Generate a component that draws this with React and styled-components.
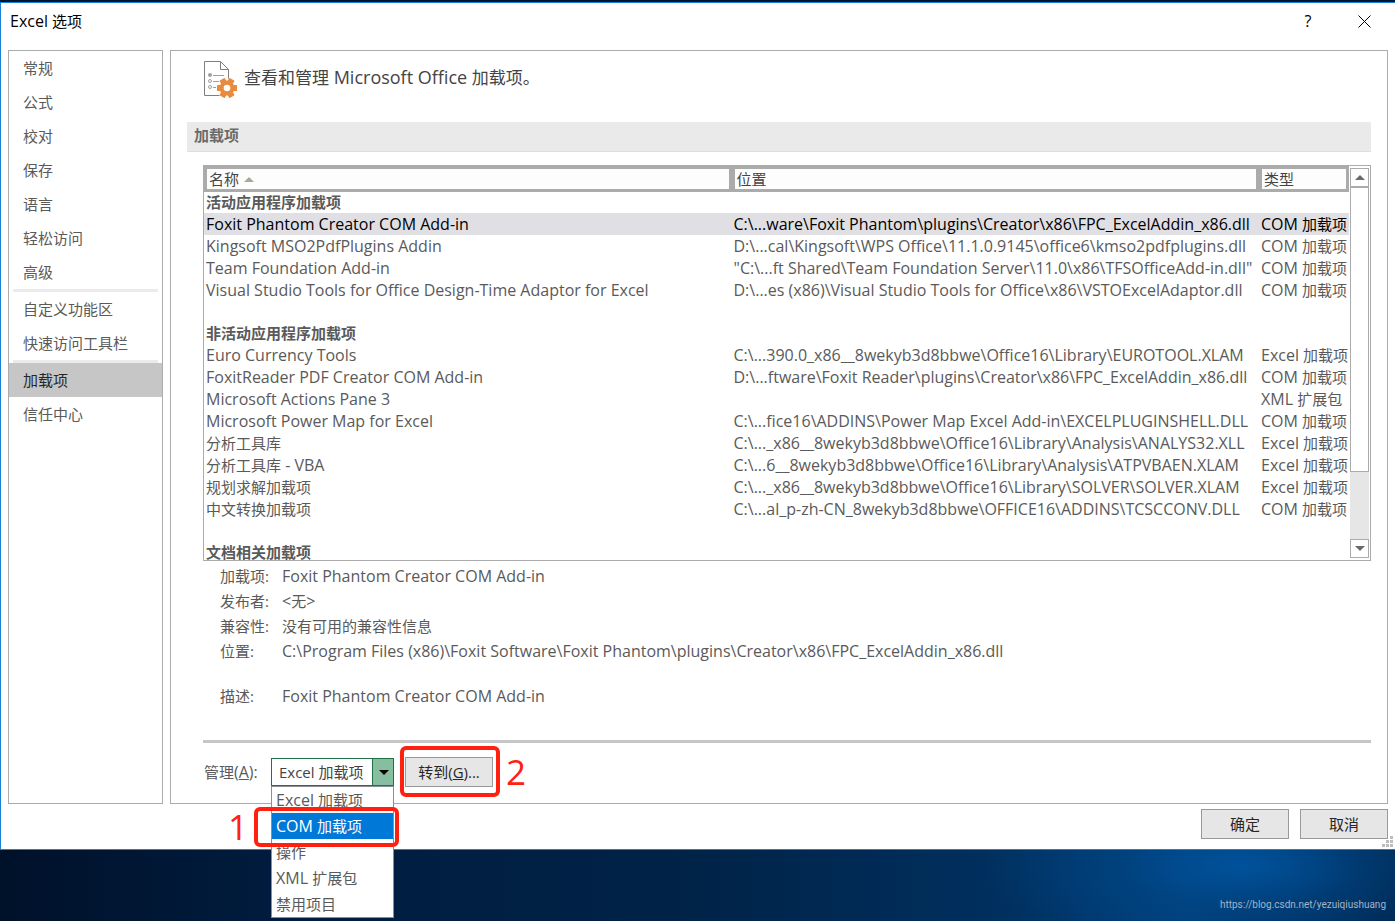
import React, { useState } from "react";
import styled, { createGlobalStyle } from "styled-components";

const GlobalStyle = createGlobalStyle`
  *, *::before, *::after { box-sizing: border-box; }
  body {
    margin: 0;
    font-family: "Open Sans", "Noto Sans CJK SC", sans-serif;
    font-size: 15px;
    line-height: 22px;
    color: #5a5a5a;
  }
  button, select { font: inherit; }
`;

const Latin = styled.span`
  font-size: ${(p) => (p.$large ? "18px" : "16px")};
  line-height: 1;
`;

const Desktop = styled.div`
  min-height: 100vh;
  display: flex;
  flex-direction: column;
  padding-top: 2px;
  background: #001733;
`;

const Dialog = styled.section`
  background: #fff;
  border: 1px solid #1883d7;
  border-right: 0;
`;

const TitleBar = styled.header`
  display: flex;
  align-items: center;
  height: 47px;
  padding: 0 14px 11px 9px;
  color: #000;
`;

const Title = styled.h1`
  margin: 0;
  flex: 1;
  font-size: 15px;
  font-weight: 400;
`;

const CaptionButtons = styled.div`
  display: flex;
  gap: 22px;
`;

const CaptionButton = styled.button`
  width: 34px;
  height: 30px;
  display: grid;
  place-items: center;
  padding: 0;
  border: 0;
  background: none;
  color: #000;
`;

const Body = styled.div`
  display: flex;
  gap: 7px;
  padding: 0 7px;
`;

const Sidebar = styled.nav`
  width: 155px;
  flex: none;
  border: 1px solid #ababab;
`;

const NavGroup = styled.ul`
  list-style: none;
  margin: 0;
  padding: 0;

  & + &::before {
    content: "";
    display: block;
    height: 3px;
    margin: 0 4px;
    background: #ebebeb;
  }
`;

const NavLink = styled.a`
  display: block;
  padding: 0 14px;
  line-height: 34px;
  text-decoration: none;
  color: ${(p) => (p.$active ? "#262626" : "#5a5a5a")};
  background: ${(p) => (p.$active ? "#c6c6c6" : "transparent")};
`;

const Panel = styled.main`
  flex: 1;
  min-width: 0;
  border: 1px solid #ababab;
  padding: 10px 16px 16px;
`;

const PanelHeading = styled.div`
  display: flex;
  gap: 6px;
  height: 61px;
  padding-left: 17px;
`;

const PanelTitle = styled.h2`
  margin: 0;
  font-size: 17px;
  font-weight: 400;
  line-height: 34px;
  color: #444;
`;

const SectionTitle = styled.h3`
  margin: 0 0 13px;
  padding: 0 7px;
  font-size: 15px;
  line-height: 26px;
  height: 30px;
  color: #6a6a6a;
  background: #eaeaea;
  border-bottom: 1px solid #dedede;
`;

const Inset = styled.div`
  padding-left: 16px;
`;

const ListBox = styled.div`
  display: flex;
  height: 396px;
  border: 1px solid #ababab;
`;

const ListView = styled.div`
  flex: 1;
  min-width: 0;
  overflow: hidden;
`;

const Table = styled.table`
  width: 100%;
  table-layout: fixed;
  border-collapse: separate;
  border-spacing: 0;
`;

const HeadCell = styled.th`
  width: ${(p) => p.$width || "auto"};
  height: 26px;
  padding: 0 2px;
  border: 3px solid #ababab;
  background: #fdfdfd;
  line-height: 20px;
  font-weight: 400;
  text-align: left;
  color: #444;
`;

const SortMark = styled.svg`
  margin-left: 5px;
  vertical-align: 3px;
`;

const GroupCell = styled.th`
  height: 21px;
  padding: 0 2px;
  line-height: 21px;
  font-weight: 700;
  text-align: left;
`;

const GapCell = styled.td`
  height: 22px;
  padding: 0;
`;

const Row = styled.tr`
  background: ${(p) => (p.$selected ? "#e0dfe4" : "transparent")};
  color: ${(p) => (p.$selected ? "#000" : "inherit")};
`;

const Cell = styled.td`
  height: 22px;
  padding: 0 0 0 2px;
  white-space: nowrap;
`;

const Scrollbar = styled.div`
  width: 21px;
  flex: none;
  display: flex;
  flex-direction: column;
  padding: 2px 1px;
`;

const Track = styled.div`
  flex: 1;
  background: #e6e6e6;
`;

const Thumb = styled.div`
  height: 81%;
  border: 1px solid #ababab;
  background: #fff;
`;

const ScrollButton = styled.button`
  height: 19px;
  display: grid;
  place-items: center;
  padding: 0;
  border: 1px solid #ababab;
  background: #fff;
`;

const Details = styled.dl`
  display: grid;
  grid-template-columns: 62px 1fr;
  grid-auto-rows: 25px;
  margin: 0;
  padding: 3px 0 0 17px;
  line-height: 25px;
  height: 179px;
`;

const Term = styled.dt`
  margin-top: ${(p) => (p.$spaced ? "20px" : "0")};
`;

const Value = styled.dd`
  margin: ${(p) => (p.$spaced ? "20px 0 0" : "0")};
`;

const Rule = styled.hr`
  height: 3px;
  margin: 0;
  border: 0;
  background: #c6c6c6;
`;

const ManageRow = styled.div`
  display: flex;
  align-items: center;
  height: 30px;
  margin-top: 14px;
  padding-left: 1px;
`;

const ManageLabel = styled.label`
  width: 67px;
`;

const Combo = styled.div`
  position: relative;
  width: 123px;
  height: 28px;
  margin-right: 11px;
`;

const Select = styled.select`
  appearance: none;
  width: 100%;
  height: 28px;
  padding: 0 24px 0 7px;
  border: 1px solid #217346;
  border-radius: 0;
  background: #fff;
  color: #444;
  line-height: 26px;
`;

const ComboArrow = styled.span`
  position: absolute;
  top: 0;
  right: 0;
  width: 22px;
  height: 28px;
  display: grid;
  place-items: center;
  padding-left: 2px;
  border: 1px solid #217346;
  background: #86bfa0;
  pointer-events: none;
`;

const Options = styled.ul`
  position: absolute;
  z-index: 1;
  top: 28px;
  left: 0;
  right: 0;
  margin: 0;
  padding: 0;
  list-style: none;
  border: 1px solid #8a8f96;
  background: #fff;
`;

const Option = styled.li`
  padding: 0 4px;
  line-height: 26px;
  color: ${(p) => (p.$active ? "#fff" : "#5a5a5a")};
  background: ${(p) => (p.$active ? "#0078d7" : "#fff")};
`;

const PushButton = styled.button`
  width: 88px;
  height: 30px;
  padding: 0;
  border: 1px solid #999;
  background: #e6e6e6;
  color: #262626;
`;

const Marked = styled.div`
  position: relative;
  display: flex;
`;

const Callout = styled.span`
  position: absolute;
  z-index: 2;
  inset: ${(p) => p.$inset};
  border: 4px solid #ff2010;
  border-radius: 6px;
  pointer-events: none;
`;

const CalloutNumber = styled.span`
  position: absolute;
  top: 50%;
  ${(p) => (p.$side === "left" ? "right: 100%;" : "left: 100%;")}
  margin: 0 10px;
  font-size: 35px;
  line-height: 36px;
  transform: translateY(-50%);
  color: #ff2010;
`;

const Footer = styled.footer`
  position: relative;
  display: flex;
  justify-content: flex-end;
  gap: 11px;
  padding: 5px 7px 10px;
`;

const Grip = styled.svg`
  position: absolute;
  right: 2px;
  bottom: 2px;
`;

const Wallpaper = styled.div`
  flex: 1;
  min-height: 71px;
  display: flex;
  justify-content: flex-end;
  align-items: flex-end;
  padding: 0 9px 8px;
  background:
    radial-gradient(ellipse 260px 90px at 89% 22%, #00529c 0%, rgba(0, 74, 140, 0.5) 45%, rgba(0, 50, 100, 0) 100%),
    linear-gradient(90deg, #00112a 0%, #001c3e 20%, #002348 50%, #00305f 72%, #003f7a 85%, #00254d 100%);
`;

const Watermark = styled.span`
  font-family: Roboto, sans-serif;
  font-size: 10px;
  line-height: 16px;
  color: #a3b4c8;
`;

const NAV = [
  ["常规", "公式", "校对", "保存", "语言", "轻松访问", "高级"],
  ["自定义功能区", "快速访问工具栏"],
  ["加载项", "信任中心"],
];

const COM = "COM 加载项";
const XL = "Excel 加载项";

const GROUPS = [
  {
    title: "活动应用程序加载项",
    rows: [
      ["Foxit Phantom Creator COM Add-in", "C:\\...ware\\Foxit Phantom\\plugins\\Creator\\x86\\FPC_ExcelAddin_x86.dll", COM],
      ["Kingsoft MSO2PdfPlugins Addin", "D:\\...cal\\Kingsoft\\WPS Office\\11.1.0.9145\\office6\\kmso2pdfplugins.dll", COM],
      ["Team Foundation Add-in", "\"C:\\...ft Shared\\Team Foundation Server\\11.0\\x86\\TFSOfficeAdd-in.dll\"", COM],
      ["Visual Studio Tools for Office Design-Time Adaptor for Excel", "D:\\...es (x86)\\Visual Studio Tools for Office\\x86\\VSTOExcelAdaptor.dll", COM],
    ],
  },
  {
    title: "非活动应用程序加载项",
    rows: [
      ["Euro Currency Tools", "C:\\...390.0_x86__8wekyb3d8bbwe\\Office16\\Library\\EUROTOOL.XLAM", XL],
      ["FoxitReader PDF Creator COM Add-in", "D:\\...ftware\\Foxit Reader\\plugins\\Creator\\x86\\FPC_ExcelAddin_x86.dll", COM],
      ["Microsoft Actions Pane 3", "", "XML 扩展包"],
      ["Microsoft Power Map for Excel", "C:\\...fice16\\ADDINS\\Power Map Excel Add-in\\EXCELPLUGINSHELL.DLL", COM],
      ["分析工具库", "C:\\..._x86__8wekyb3d8bbwe\\Office16\\Library\\Analysis\\ANALYS32.XLL", XL],
      ["分析工具库 - VBA", "C:\\...6__8wekyb3d8bbwe\\Office16\\Library\\Analysis\\ATPVBAEN.XLAM", XL],
      ["规划求解加载项", "C:\\..._x86__8wekyb3d8bbwe\\Office16\\Library\\SOLVER\\SOLVER.XLAM", XL],
      ["中文转换加载项", "C:\\...al_p-zh-CN_8wekyb3d8bbwe\\OFFICE16\\ADDINS\\TCSCCONV.DLL", COM],
    ],
  },
  { title: "文档相关加载项", rows: [] },
];

const DETAILS = [
  ["加载项:", "Foxit Phantom Creator COM Add-in"],
  ["发布者:", "<无>"],
  ["兼容性:", "没有可用的兼容性信息"],
  ["位置:", "C:\\Program Files (x86)\\Foxit Software\\Foxit Phantom\\plugins\\Creator\\x86\\FPC_ExcelAddin_x86.dll"],
  ["描述:", "Foxit Phantom Creator COM Add-in"],
];

const MANAGE = [XL, COM, "操作", "XML 扩展包", "禁用项目"];

// Latin runs are set one size up so that they balance the Chinese text.
const Mixed = ({ children, large }) =>
  children
    .split(/([\x20-\x7e]+)/)
    .filter(Boolean)
    .map((run, i) => (/^[\x20-\x7e]/.test(run) ? <Latin key={i} $large={large}>{run}</Latin> : run));

const AddinsIcon = () => (
  <svg width="34" height="37" viewBox="0 0 34 37" fill="none" aria-hidden="true">
    <path d="M15.5 34.5H.5V.5h16l8 8v9" stroke="#7f7f7f" />
    <path d="M16.500 .5v8h8" stroke="#7f7f7f" />
    <circle cx="6" cy="14" r="2" fill="#a0a0a0" />
    <circle cx="6" cy="20" r="1.500" stroke="#a0a0a0" />
    <circle cx="6" cy="26" r="1.500" stroke="#a0a0a0" />
    <path d="M9 14.500h11M9 20.500h6M9 26.500h3" stroke="#a0a0a0" />
    <g fill="#e88b3f">
      {[30, 90, 150].map((a) => (
        <rect key={a} x="20" y="17" width="6" height="20" rx="0.500" transform={`rotate(${a} 23 27)`} />
      ))}
      <circle cx="23" cy="27" r="7.500" />
    </g>
    <circle cx="23" cy="27" r="3.300" fill="#fff" />
  </svg>
);

const Triangle = ({ up, color }) => (
  <svg width="10" height="5" viewBox="0 0 10 5" aria-hidden="true">
    <path d={up ? "M0 5L5 0L10 5Z" : "M0 0L5 5L10 0Z"} fill={color} />
  </svg>
);

export default function App() {
  const [manage, setManage] = useState(XL);
  return (
    <>
      <GlobalStyle />
      <Desktop>
        <Dialog aria-label="Excel 选项">
          <TitleBar>
            <Title><Mixed>Excel 选项</Mixed></Title>
            <CaptionButtons>
              <CaptionButton aria-label="帮助"><Latin>?</Latin></CaptionButton>
              <CaptionButton aria-label="关闭">
                <svg width="13" height="13" viewBox="0 0 13 13" stroke="#000" aria-hidden="true">
                  <path d="M.5.5l12 12M12.500.5l-12 12" />
                </svg>
              </CaptionButton>
            </CaptionButtons>
          </TitleBar>
          <Body>
            <Sidebar>
              {NAV.map((group) => (
                <NavGroup key={group[0]}>
                  {group.map((name) => (
                    <li key={name}>
                      <NavLink href="#" $active={name === "加载项"}>{name}</NavLink>
                    </li>
                  ))}
                </NavGroup>
              ))}
            </Sidebar>
            <Panel>
              <PanelHeading>
                <AddinsIcon />
                <PanelTitle><Mixed large>查看和管理 Microsoft Office 加载项。</Mixed></PanelTitle>
              </PanelHeading>
              <SectionTitle>加载项</SectionTitle>
              <Inset>
                <ListBox>
                  <ListView>
                    <Table>
                      <thead>
                        <tr>
                          <HeadCell>
                            名称
                            <SortMark width="10" height="5" aria-hidden="true">
                              <path d="M0 5L5 0L10 5Z" fill="#aca899" />
                            </SortMark>
                          </HeadCell>
                          <HeadCell>位置</HeadCell>
                          <HeadCell $width="90px">类型</HeadCell>
                        </tr>
                      </thead>
                      {GROUPS.map((group, g) => (
                        <tbody key={group.title}>
                          {g > 0 && <tr><GapCell colSpan={3} /></tr>}
                          <tr><GroupCell colSpan={3} scope="rowgroup">{group.title}</GroupCell></tr>
                          {group.rows.map((row, r) => (
                            <Row key={row[0]} $selected={g === 0 && r === 0}>
                              {row.map((text, c) => <Cell key={c}><Mixed>{text}</Mixed></Cell>)}
                            </Row>
                          ))}
                        </tbody>
                      ))}
                    </Table>
                  </ListView>
                  <Scrollbar>
                    <ScrollButton aria-label="向上滚动"><Triangle up color="#6a6a6a" /></ScrollButton>
                    <Track><Thumb /></Track>
                    <ScrollButton aria-label="向下滚动"><Triangle color="#6a6a6a" /></ScrollButton>
                  </Scrollbar>
                </ListBox>
                <Details>
                  {DETAILS.map(([term, value], i) => (
                    <React.Fragment key={term}>
                      <Term $spaced={i === 4}>{term}</Term>
                      <Value $spaced={i === 4}><Mixed>{value}</Mixed></Value>
                    </React.Fragment>
                  ))}
                </Details>
                <Rule />
                <ManageRow>
                  <ManageLabel htmlFor="manage">管理<Latin>(<u>A</u>):</Latin></ManageLabel>
                  <Combo>
                    <Select id="manage" value={manage} onChange={(e) => setManage(e.target.value)}>
                      {MANAGE.map((name) => <option key={name}>{name}</option>)}
                    </Select>
                    <ComboArrow><Triangle color="#000" /></ComboArrow>
                    <Options>
                      {MANAGE.map((name) => (
                        <Option key={name} $active={name === COM}><Mixed>{name}</Mixed></Option>
                      ))}
                    </Options>
                    <Callout $inset="49px -5px -61px -17px">
                      <CalloutNumber $side="left">1</CalloutNumber>
                    </Callout>
                  </Combo>
                  <Marked>
                    <PushButton>转到(<u>G</u>)...</PushButton>
                    <Callout $inset="-11px -7px -10px -5px">
                      <CalloutNumber $side="right">2</CalloutNumber>
                    </Callout>
                  </Marked>
                </ManageRow>
              </Inset>
            </Panel>
          </Body>
          <Footer>
            <PushButton>确定</PushButton>
            <PushButton>取消</PushButton>
            <Grip width="11" height="11" fill="#bdbdbd" aria-hidden="true">
              <path d="M8 0h3v3h-3zM4 4h3v3h-3zM8 4h3v3h-3zM0 8h3v3h-3zM4 8h3v3h-3zM8 8h3v3h-3z" />
            </Grip>
          </Footer>
        </Dialog>
        <Wallpaper>
          <Watermark>https://blog.csdn.net/yezuiqiushuang</Watermark>
        </Wallpaper>
      </Desktop>
    </>
  );
}
